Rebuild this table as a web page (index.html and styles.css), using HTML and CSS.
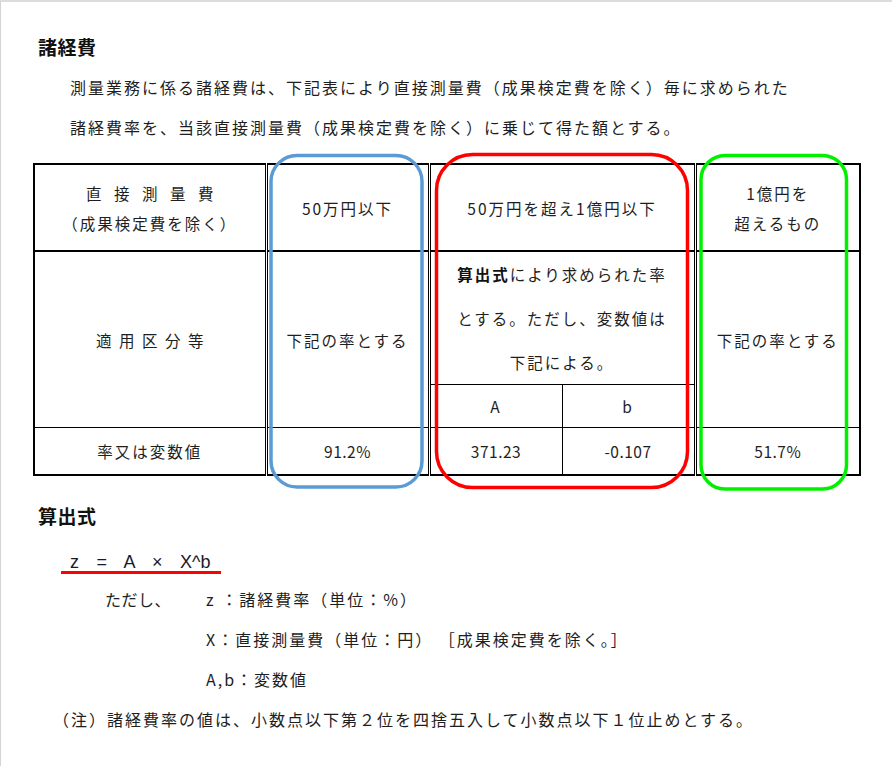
FILE: index.html
```html
<!DOCTYPE html>
<html lang="ja">
<head>
<meta charset="utf-8">
<title>諸経費</title>
<link rel="stylesheet" href="styles.css">
</head>
<body>
<div class="page">
  <h2 class="title">諸経費</h2>
  <div class="intro">
    <p>測量業務に係る諸経費は、下記表により直接測量費（成果検定費を除く）毎に求められた</p>
    <p>諸経費率を、当該直接測量費（成果検定費を除く）に乗じて得た額とする。</p>
  </div>
  <div class="table-wrap">
    <table class="rates">
      <colgroup>
        <col class="c1"><col class="c2"><col class="c3"><col class="c4"><col class="c5">
      </colgroup>
      <tr class="r1">
        <td><span class="wide">直接測量費</span><br>（成果検定費を除く）</td>
        <td class="dbl">50万円以下</td>
        <td class="dbl" colspan="2">50万円を超え1億円以下</td>
        <td class="dbl">1億円を<br>超えるもの</td>
      </tr>
      <tr class="r2">
        <td rowspan="2"><span class="mid">適用区分等</span></td>
        <td class="dbl" rowspan="2">下記の率とする</td>
        <td class="dbl note-cell" colspan="2"><b>算出式</b>により求められた率<br>とする。ただし、変数値は<br>下記による。</td>
        <td class="dbl" rowspan="2">下記の率とする</td>
      </tr>
      <tr class="r3">
        <td class="dbl">A</td>
        <td class="thin">b</td>
      </tr>
      <tr class="r4">
        <td>率又は変数値</td>
        <td class="dbl num">91.2%</td>
        <td class="dbl num">371.23</td>
        <td class="thin num">-0.107</td>
        <td class="dbl num">51.7%</td>
      </tr>
    </table>
    <svg class="marks" width="892" height="766" viewBox="0 0 892 766" aria-hidden="true">
      <g transform="translate(-33,-163)" fill="none" stroke-width="3.5">
        <rect x="271" y="155.5" width="151" height="331.5" rx="26" ry="26" stroke="#5b9bd5"/>
        <rect x="436.5" y="154.5" width="251" height="333" rx="36" ry="36" stroke="#ff0000"/>
        <rect x="701" y="155.5" width="145.5" height="333.5" rx="24" ry="24" stroke="#00f000"/>
      </g>
    </svg>
  </div>

  <h2 class="subtitle">算出式</h2>
  <div class="formula"><span class="expr">z = A × X^b</span></div>
  <div class="defs">
    <span class="lead">ただし、</span><span>z ：諸経費率（単位：%）</span>
    <span class="lead"></span><span>X：直接測量費（単位：円） ［成果検定費を除く。］</span>
    <span class="lead"></span><span>A,b：変数値</span>
  </div>
  <p class="note">（注）諸経費率の値は、小数点以下第２位を四捨五入して小数点以下１位止めとする。</p>
</div>
</body>
</html>
```

FILE: styles.css
```css
html, body {
  margin: 0;
  padding: 0;
  background: #ffffff;
}

body {
  font-family: "Noto Sans CJK JP", "Noto Sans", sans-serif;
  color: #1e1e1e;
  font-size: 16px;
}

.page {
  width: 892px;
  height: 766px;
  box-sizing: border-box;
  border-top: 2px solid #dcdcdc;
  border-left: 1px solid #d4d4d4;
  padding-left: 32px;
  overflow: hidden;
}

.title,
.subtitle {
  margin: 31px 0 0;
  padding-left: 5px;
  font-size: 19px;
  line-height: 28px;
  font-weight: bold;
  letter-spacing: 0.5px;
  color: #111;
}

.intro {
  margin-top: 6px;
  padding-left: 37px;
}

.intro p {
  margin: 0;
  line-height: 40px;
  letter-spacing: 2px;
  white-space: nowrap;
}

.table-wrap {
  position: relative;
  margin-top: 16px;
  width: 826px;
}

.rates {
  width: 826px;
  border-collapse: collapse;
  table-layout: fixed;
  border: 2px solid #000;
}

.c1 { width: 232px; }
.c2 { width: 163px; }
.c3 { width: 133px; }
.c4 { width: 133px; }
.c5 { width: 165px; }

.rates td {
  padding: 0;
  text-align: center;
  vertical-align: middle;
  letter-spacing: 2px;
  font-size: 15.5px;
}

.rates .dbl {
  border-left: 3px double #000;
}

.rates .thin {
  border-left: 1px solid #000;
}

.r1 td {
  height: 85px;
  line-height: 30px;
  border-bottom: 2px solid #000;
}

.r2 td {
  height: 132px;
  line-height: 44px;
}

.r3 td {
  height: 42px;
  border-top: 1px solid #000;
}

.r4 td {
  height: 46px;
  border-top: 1px solid #000;
}

.rates .num {
  letter-spacing: 0.5px;
}

.wide {
  letter-spacing: 12.5px;
  margin-right: -12.5px;
}

.mid {
  letter-spacing: 7.5px;
  margin-right: -7.5px;
}

.note-cell b {
  font-weight: bold;
  color: #111;
}

.marks {
  position: absolute;
  left: 0;
  top: 0;
  overflow: visible;
  pointer-events: none;
}

.subtitle {
  margin-top: 26px;
}

.formula {
  margin: 19px 0 0 28px;
}

.expr {
  display: inline-block;
  padding: 0 10px 0 9px;
  line-height: 18px;
  border-bottom: 3px solid #ff0000;
  font-family: "Liberation Sans", "Noto Sans", sans-serif;
  font-size: 18px;
  word-spacing: 12.5px;
  color: #1a1a2a;
}

.defs {
  margin-top: 5px;
  padding-left: 72px;
  display: grid;
  grid-template-columns: 101px 1fr;
  line-height: 40px;
  letter-spacing: 2px;
  white-space: nowrap;
}

.defs .lead {
  letter-spacing: 0.5px;
}

.note {
  margin: 0;
  padding-left: 20px;
  line-height: 40px;
  letter-spacing: 2px;
  white-space: nowrap;
}
```
